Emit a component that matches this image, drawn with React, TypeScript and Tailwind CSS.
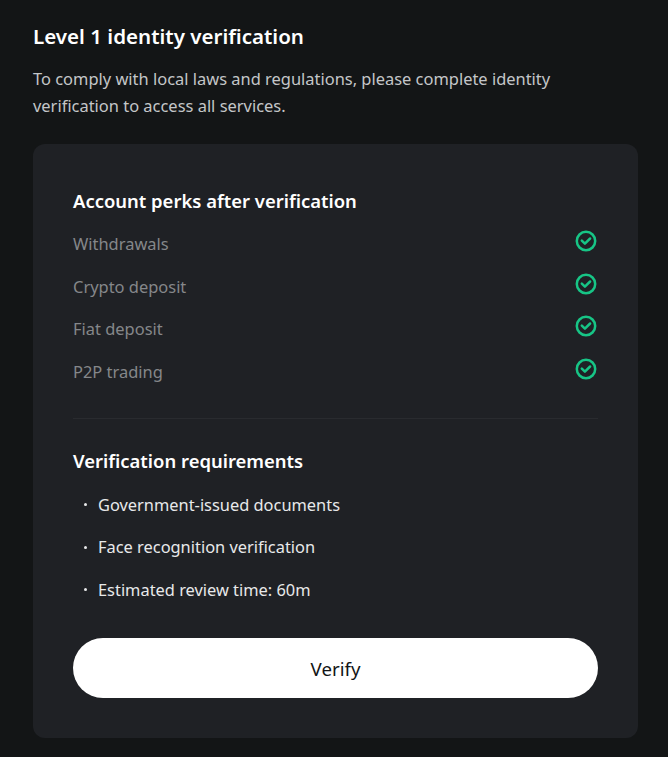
const perks = ['Withdrawals', 'Crypto deposit', 'Fiat deposit', 'P2P trading'];
const requirements = ['Government-issued documents', 'Face recognition verification', 'Estimated review time: 60m'];

function CheckIcon() {
  return (
    <svg width="22" height="22" viewBox="0 0 22 22" fill="none" className="shrink-0 -mt-[7px] -ml-px mr-px">
      <circle cx="11" cy="11" r="9.2" stroke="#17c586" strokeWidth="2.5" />
      <path d="M6.8 10.6l3.1 3 5.2-5.1" stroke="#17c586" strokeWidth="2.5" strokeLinecap="round" strokeLinejoin="round" />
    </svg>
  );
}

export default function App() {
  return (
    <div className="h-[757px] overflow-hidden bg-[#131516] pl-[33px] pt-[20px] pr-[30px] font-['Noto_Sans',sans-serif]">
      <h1 className="text-[20.55px] leading-[32px] font-semibold text-white">Level 1 identity verification</h1>
      <p className="mt-[13px] max-w-[540px] text-[16.45px] leading-[27px] text-[#c4c6c8]">
        To comply with local laws and regulations, please complete identity verification to access all services.
      </p>
      <div className="mt-[25px] h-[594px] rounded-[12px] bg-[#1f2125] px-[40px] pt-[44px]">
        <h2 className="text-[18.45px] leading-[26px] font-semibold text-white">Account perks after verification</h2>
        <ul className="mt-[16.4px] flex flex-col gap-[14.67px]">
          {perks.map((perk) => (
            <li key={perk} className="flex h-[28px] items-center justify-between text-[16.45px] text-[#85878a]">
              <span>{perk}</span>
              <CheckIcon />
            </li>
          ))}
        </ul>
        <div className="mt-[31.6px] h-px bg-[#292b2f]" />
        <h2 className="mt-[29px] text-[18.45px] leading-[26px] font-semibold text-white">Verification requirements</h2>
        <ul className="mt-[17px] flex flex-col gap-[14.5px] text-[16.4px] leading-[28px] text-[#e8e9ea]">
          {requirements.map((item) => (
            <li key={item} className="flex items-center">
              <span className="ml-[11px] mr-[11px] h-[3px] w-[3px] rounded-full bg-[#e8e9ea]" />
              {item}
            </li>
          ))}
        </ul>
        <button className="mt-[34px] h-[60px] w-full rounded-full bg-white pt-[2px] text-[18.7px] text-[#131516]">Verify</button>
      </div>
    </div>
  );
}
